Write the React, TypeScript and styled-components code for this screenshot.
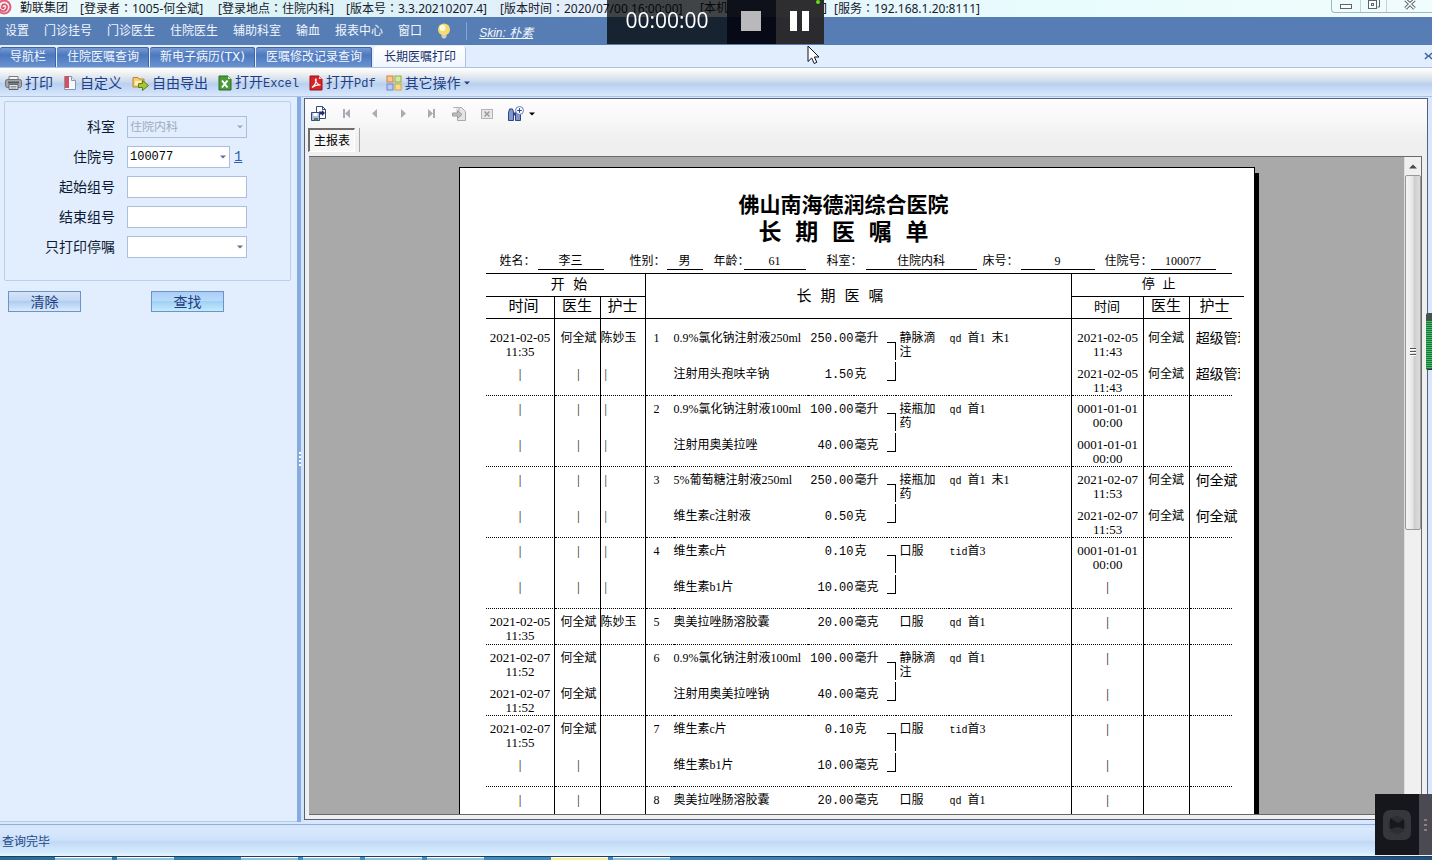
import React from 'react';
import styled, { createGlobalStyle, css } from 'styled-components';

const sans = `"Liberation Sans", "Noto Sans CJK SC", sans-serif`;
const song = `"Liberation Serif", "Noto Sans CJK SC", serif`;
const mono = `"Liberation Mono", "Noto Sans CJK SC", monospace`;

const Global = createGlobalStyle`
  *, *::before, *::after { box-sizing: border-box; }
  html, body { margin: 0; padding: 0; }
  body { font-family: ${sans}; font-size: 12px; background: #e2eefe; overflow: hidden; }
  button, input, select { font: inherit; color: inherit; margin: 0; padding: 0; border: 0; background: none; }
`;

const Window = styled.div`
  display: flex;
  flex-direction: column;
  height: 100vh;
  overflow: hidden;
  background: #e2eefe;
`;

/* ---------- title bar ---------- */

const TitleBar = styled.header`
  flex: none;
  display: flex;
  align-items: flex-start;
  height: 17px;
  background: linear-gradient(90deg, #f1fbfd 0, #dcf3f6 20%, #e3eefa 40%, #e6f7fd 60%, #e9fcfd 75%, #f1fcfc 100%);
  color: #16202c;
  font-family: "Noto Sans", "Noto Sans CJK SC", sans-serif;
  line-height: 16px;
  white-space: nowrap;
`;

const Logo = styled.svg`
  flex: none;
  width: 12px;
  height: 16px;
  margin-right: 8px;
`;

const TitlePart = styled.span<{ $width: number }>`
  flex: none;
  display: flex;
  justify-content: space-between;
  width: ${(p) => p.$width}px;
`;

const TitleText = styled.span`
  white-space: pre;
`;

const Colon = styled.span`
  font-family: "Noto Sans CJK TC", sans-serif;
`;

const WindowButtons = styled.div`
  display: flex;
  margin-left: auto;
  height: 13px;
  border: 1px solid #a3b7c0;
  border-top: 0;
  border-right: 0;
  border-radius: 0 0 0 4px;
`;

const WindowButton = styled.button<{ $width: number }>`
  display: flex;
  align-items: flex-start;
  justify-content: center;
  width: ${(p) => p.$width}px;
  height: 12px;
  & + & { border-left: 1px solid #c3d3da; }
`;

/* ---------- menu and tabs ---------- */

const MenuBar = styled.nav`
  flex: none;
  display: flex;
  align-items: center;
  gap: 15px;
  height: 28px;
  padding-left: 5px;
  background: #567db4;
  color: #f2f7ff;
`;

const MenuItem = styled.button`
  line-height: 16px;
  white-space: nowrap;
`;

const MenuDivider = styled.span`
  width: 1px;
  height: 18px;
  margin-right: -3px;
  background: #86a5d0;
`;

const SkinLink = styled.a`
  color: inherit;
  font-style: italic;
  text-decoration: underline;
`;

const TabStrip = styled.div`
  flex: none;
  display: flex;
  align-items: flex-end;
  gap: 1px;
  height: 23px;
  background: #e2eefe;
  border-bottom: 1px solid #a9c1e2;
`;

const Tab = styled.button<{ $active?: boolean }>`
  height: 20px;
  padding: 0 10px;
  border-radius: 3px 3px 0 0;
  white-space: nowrap;
  font-family: "DejaVu Sans", "Noto Sans CJK SC", sans-serif;
  line-height: 20px;
  color: #f4f8ff;
  background: linear-gradient(180deg, #7d9fd6 0, #4c78bd 40%, #6a92cf 100%);
  box-shadow: inset 0 1px 0 #3e64a4, inset -1px 0 0 #3e64a4;
  ${(p) =>
    p.$active &&
    css`
      height: 21px;
      margin-left: 1px;
      color: #17306c;
      background: linear-gradient(180deg, #ffffff, #f0f6ff);
      box-shadow: inset 1px 1px 0 #ffffff, inset -1px 0 0 #a9c1e2;
    `}
`;

const TabClose = styled.button`
  display: flex;
  align-self: center;
  margin-left: auto;
  width: 8px;
  overflow: hidden;
`;

/* ---------- main tool bar ---------- */

const ToolBar = styled.div`
  flex: none;
  display: flex;
  align-items: center;
  gap: 10px;
  height: 29px;
  padding-top: 2px;
  padding-left: 5px;
  border-bottom: 1px solid #a9c3e6;
  background: linear-gradient(180deg, #ffffff 0, #eef0f2 20%, #cbd9ec 50%, #b8d0f0 56%, #d9e8fc 100%);
  color: #203f86;
`;

const ToolButton = styled.button`
  display: flex;
  align-items: center;
  gap: 3px;
  font-size: 14px;
  line-height: 20px;
  white-space: nowrap;
`;

const Latin = styled.span`
  font-family: ${mono};
  font-size: 12px;
`;

/* ---------- body ---------- */

const Body = styled.main`
  flex: 1;
  display: flex;
  min-height: 0;
  padding-right: 4px;
  padding-bottom: 2px;
  border-bottom: 1px solid #8fb0dc;
  background: #d9e6fb;
`;

const SidePanel = styled.aside`
  flex: none;
  width: 297px;
  padding: 4px 6px 0 4px;
  border-bottom: 1px solid #b3cbec;
  background: #e2eefe;
`;

const FilterBox = styled.form`
  display: flex;
  flex-direction: column;
  gap: 8px;
  height: 180px;
  padding-top: 14px;
  border: 1px solid #b8cfec;
  border-radius: 2px;
`;

const FormRow = styled.div`
  display: grid;
  grid-template-columns: 110px auto auto;
  justify-content: start;
  align-items: center;
  column-gap: 12px;
  height: 22px;
`;

const FormLabel = styled.label`
  font-size: 14px;
  line-height: 20px;
  text-align: right;
  color: #0d1a33;
`;

const fieldLook = css`
  height: 22px;
  border: 1px solid #a9bfdd;
  border-radius: 0;
  background: #ffffff;
  color: #000000;
  padding: 0 2px;
  font-family: ${mono};
  font-size: 12px;
  outline: none;
`;

const TextField = styled.input`
  ${fieldLook}
  width: 120px;
`;

const SelectBox = styled.span`
  display: grid;
  align-items: center;
  & > * { grid-area: 1 / 1; }
  & > svg { justify-self: end; margin-right: 4px; pointer-events: none; }
`;

const Select = styled.select<{ $width: number }>`
  ${fieldLook}
  width: ${(p) => p.$width}px;
  appearance: none;
  &:disabled {
    background: #e2eefe;
    color: #a0acbf;
    opacity: 1;
    padding-top: 2px;
  }
`;

const CountLink = styled.a`
  margin-left: -8px;
  color: #2c5fb0;
  font-family: ${mono};
  font-size: 14px;
`;

const ActionRow = styled.div`
  display: flex;
  gap: 70px;
  padding: 10px 4px 0;
`;

const ActionButton = styled.button<{ $hot?: boolean }>`
  width: 73px;
  height: 21px;
  border: 1px solid #6d94c8;
  font-size: 14px;
  line-height: 18px;
  color: #1f3d7c;
  background: ${(p) =>
    p.$hot
      ? 'linear-gradient(180deg, #a9cdf5 0, #b9dbfa 45%, #9fd0f5 50%, #c4eafd 100%)'
      : 'linear-gradient(180deg, #d5e4f8 0, #c3d8f4 45%, #b0cdf0 50%, #d9eafd 100%)'};
`;

const Splitter = styled.div`
  flex: none;
  display: flex;
  align-items: center;
  justify-content: center;
  width: 7px;
  border-left: 4px solid #86abe0;
  background: #d3e3fa;
`;

const Grip = styled.svg`
  flex: none;
  margin-left: -5px;
`;

const Viewer = styled.section`
  flex: 1;
  display: flex;
  flex-direction: column;
  min-width: 0;
  min-height: 0;
  margin-top: 1px;
  margin-bottom: 2px;
  padding: 0 5px 4px 4px;
  border: 1px solid #55607a;
  background: linear-gradient(180deg, #fdfdfd 0, #f8f8f8 20px, #efefef 42px, #f0f0f0 100%);
`;

const ViewerTools = styled.div`
  flex: none;
  display: flex;
  align-items: center;
  gap: 12px;
  height: 29px;
  padding-left: 2px;
`;

const IconButton = styled.button`
  display: flex;
  align-items: center;
  justify-content: center;
  gap: 4px;
  min-width: 16px;
  height: 20px;
`;

const SheetTabs = styled.div`
  flex: none;
  display: flex;
  align-items: flex-start;
  height: 28px;
`;

const SheetTab = styled.button`
  width: 47px;
  height: 24px;
  margin-left: -1px;
  border: 1px solid #ffffff;
  border-top: 2px solid #6d6d6d;
  border-left: 2px solid #6d6d6d;
  background: #f7f7f7;
  color: #000000;
  line-height: 20px;
  white-space: nowrap;
`;

const SheetEdge = styled.span`
  width: 1px;
  height: 24px;
  margin-left: 4px;
  background: #a8a8a8;
`;

const CanvasRow = styled.div`
  flex: 1;
  display: flex;
  min-height: 0;
  border: 1px solid #6a6a6a;
  border-left: 0;
`;

const Canvas = styled.div`
  flex: 1;
  min-width: 0;
  overflow: hidden;
  padding-top: 10px;
  background: #a9a9a9;
`;

const ScrollBar = styled.div`
  flex: none;
  display: flex;
  flex-direction: column;
  width: 17px;
  border-left: 1px solid #dedede;
  background: #f0f0f0;
`;

const ScrollUp = styled.button`
  display: flex;
  align-items: center;
  justify-content: center;
  height: 18px;
`;

const ScrollThumb = styled.div`
  display: flex;
  flex-direction: column;
  align-items: center;
  justify-content: center;
  gap: 1px;
  height: 54%;
  border: 1px solid #989898;
  border-radius: 2px;
  background: linear-gradient(90deg, #f5f5f5 0, #e8e8e8 45%, #cfcfcf 60%, #dcdcdc 100%);
`;

const ThumbLine = styled.span`
  width: 6px;
  height: 2px;
  background: #555555;
  border-bottom: 1px solid #ffffff;
`;

/* ---------- report sheet ---------- */

const Paper = styled.article`
  width: 796px;
  min-height: 1100px;
  margin: 0 auto;
  padding: 23px 0 40px 26px;
  border: 1px solid #000000;
  background: #ffffff;
  box-shadow: 4px 6px 0 #000000;
  color: #000000;
  font-family: ${song};
`;

const Hospital = styled.h1`
  width: 716px;
  margin: 0;
  text-align: center;
  font-size: 21px;
  line-height: 28px;
  font-weight: bold;
`;

const ReportTitle = styled.h2`
  width: 716px;
  margin: 0;
  text-align: center;
  font-family: ${mono};
  font-size: 23px;
  line-height: 30px;
  font-weight: bold;
`;

const PatientLine = styled.div`
  display: flex;
  height: 24px;
  padding-top: 4px;
  line-height: 16px;
  white-space: nowrap;
`;

const PatientLabel = styled.span<{ $before: number; $width: number }>`
  flex: none;
  margin-left: ${(p) => p.$before}px;
  width: ${(p) => p.$width}px;
`;

const PatientValue = styled.span<{ $width: number }>`
  flex: none;
  width: ${(p) => p.$width}px;
  height: 17px;
  border-bottom: 1px solid #000000;
  text-align: center;
`;

const OrderTable = styled.table`
  width: 746px;
  table-layout: fixed;
  border-collapse: separate;
  border-spacing: 0;
`;

const Head = styled.th<{ $height: number; $size: number; $pad?: string; $top?: boolean; $edge?: boolean; $wide?: boolean }>`
  height: ${(p) => p.$height}px;
  padding: ${(p) => p.$pad ?? '0'};
  border-bottom: 1px solid #000000;
  border-top: ${(p) => (p.$top ? '1px solid #000000' : '0')};
  border-right: ${(p) => (p.$edge ? '1px solid #000000' : '0')};
  font-family: ${mono};
  font-weight: normal;
  font-size: ${(p) => p.$size}px;
  line-height: 20px;
  white-space: nowrap;
  ${(p) =>
    p.$wide &&
    css`
      position: relative;
      &::after {
        content: '';
        position: absolute;
        right: -12px;
        bottom: -1px;
        width: 12px;
        height: 1px;
        background: #000000;
      }
    `}
`;

const Spacer = styled.td<{ $edge?: boolean }>`
  height: 6px;
  padding: 0;
  border-right: ${(p) => (p.$edge ? '1px solid #000000' : '0')};
`;

const Cell = styled.td<{ $end: boolean; $edge?: boolean; $align?: string; $left?: number; $height: number }>`
  height: ${(p) => p.$height}px;
  padding: 6px 0 0 ${(p) => p.$left ?? 0}px;
  vertical-align: top;
  text-align: ${(p) => p.$align ?? 'left'};
  line-height: 14px;
  white-space: nowrap;
  border-right: ${(p) => (p.$edge ? '1px solid #000000' : '0')};
  border-bottom: ${(p) => (p.$end ? '1px dotted #000000' : '0')};
`;

const Stamp = styled.div`
  height: 28px;
  font-size: 13px;
  white-space: pre-line;
`;

const Dose = styled.span`
  font-family: ${mono};
`;

const Usage = styled.div`
  width: 38px;
  height: 28px;
  white-space: normal;
`;

const FreqCode = styled.span`
  display: inline-block;
  width: 18px;
  font-family: ${mono};
  font-size: 10px;
`;

const FreqMarks = styled.span`
  display: inline-flex;
  gap: 6px;
`;

const EndNurse = styled.div`
  width: 44px;
  overflow: hidden;
  font-size: 14px;
  line-height: 16px;
`;

const Bracket = styled.div<{ $lower?: boolean }>`
  width: 9px;
  border-right: 1px solid #000000;
  ${(p) =>
    p.$lower
      ? css`
          height: 19px;
          margin-top: -5px;
          border-bottom: 1px solid #000000;
        `
      : css`
          height: 18px;
          margin-top: 11px;
          border-top: 1px solid #000000;
        `}
`;

/* ---------- bottom bars ---------- */

const StatusBar = styled.footer`
  flex: none;
  height: 31px;
  padding-left: 2px;
  border-top: 3px solid #d6e4f8;
  background: linear-gradient(180deg, #d9e9fe 0, #cfe2fb 40%, #c2d9f5 50%, #d6edff 90%, #eef7ff 100%);
  color: #1d4688;
  line-height: 28px;
`;

const TaskBar = styled.div`
  flex: none;
  display: flex;
  gap: 5px;
  height: 4px;
  padding-left: 55px;
  background: linear-gradient(90deg, #2a6a92 0, #3b8fc4 20%, #3f86bd 50%, #24507e 100%);
  border-top: 1px solid #1c3f5c;
`;

const Task = styled.span<{ $active?: boolean }>`
  width: 57px;
  height: 3px;
  border-top: 1px solid #ffffff;
  background: ${(p) => (p.$active ? '#f2ee9a' : '#8fc3dd')};
`;

const TaskGap = styled.span`
  width: 57px;
`;

/* ---------- floating pieces ---------- */

const Recorder = styled.div`
  position: fixed;
  top: 0;
  left: 50%;
  display: flex;
  width: 217px;
  height: 44px;
  margin-left: -109px;
`;

const RecorderTime = styled.output`
  width: 120px;
  background: rgba(0, 0, 0, 0.72);
  color: #ffffff;
  font-family: "Open Sans", sans-serif;
  font-size: 21px;
  line-height: 40px;
  text-align: center;
`;

const RecorderButton = styled.button<{ $dark?: boolean }>`
  display: flex;
  align-items: center;
  justify-content: center;
  flex: 1;
  padding-bottom: 2px;
  background: ${(p) => (p.$dark ? 'rgba(3, 4, 14, 0.95)' : 'rgba(42, 42, 44, 0.98)')};
`;

const RecorderLight = styled.i`
  position: absolute;
  top: 0;
  right: 4px;
  width: 4px;
  height: 4px;
  border-radius: 2px;
  background: #5fe01c;
`;

const Pointer = styled.svg`
  position: fixed;
  top: 45px;
  left: 807px;
`;

const Meter = styled.div`
  position: fixed;
  top: 313px;
  right: 0;
  width: 6px;
  height: 57px;
  border-top: 8px solid #47524c;
  border-bottom: 1px solid #25352c;
  border-radius: 2px 0 0 2px;
  background: repeating-linear-gradient(180deg, #3fbb64 0 1px, #23713c 1px 2px);
`;

const Dock = styled.div`
  position: fixed;
  right: 0;
  bottom: 5px;
  display: flex;
  width: 57px;
  height: 61px;
  background: #15171d;
`;

const DockButton = styled.button`
  flex: 1;
  display: flex;
  align-items: center;
  justify-content: center;
`;

const DockHandle = styled.div`
  display: flex;
  align-items: center;
  justify-content: center;
  width: 13px;
  background: #4b4a53;
`;

/* ---------- data ---------- */

const titleParts: [string, string, number][] = [
  ['勤联集团', '', 60],
  ['[登录者：1005-何全斌]', '', 138],
  ['[登录地点：住院内科]', '', 128],
  ['[版本号：3.3.20210207.4]', '', 154],
  ['[版本时间：2020/07/00 16:00:00]', '', 200],
  ['[本机', ']', 127],
  ['', '', 7],
  ['[服务：192.168.1.20:8111]', '', 160],
];

const menus = ['设置', '门诊挂号', '门诊医生', '住院医生', '辅助科室', '输血', '报表中心', '窗口'];
const tabs = ['导航栏', '住院医嘱查询', '新电子病历(TX)', '医嘱修改记录查询', '长期医嘱打印'];

const patient: [string, string, number, number, number][] = [
  ['姓名：', '李三', 14, 38, 66],
  ['性别：', '男', 26, 37, 36],
  ['年龄：', '61', 11, 30, 62],
  ['科室：', '住院内科', 21, 39, 111],
  ['床号：', '9', 6, 38, 74],
  ['住院号：', '100077', 10, 46, 65],
];

type Line = {
  start: string;
  doctor: string;
  nurse: string;
  drug: string;
  dose: string;
  unit: string;
  stop: string;
  stopDoctor?: string;
  stopNurse?: string;
};
type Group = { no: number; usage: string; code: string; marks: string[]; lines: Line[] };

const line = (
  start: string,
  doctor: string,
  nurse: string,
  drug: string,
  dose: string,
  unit: string,
  stop: string,
  stopDoctor = '',
  stopNurse = '',
): Line => ({ start, doctor, nurse, drug, dose, unit, stop, stopDoctor, stopNurse });

const feb5 = '2021-02-05\n11:35';
const none = '0001-01-01\n00:00';

const groups: Group[] = [
  {
    no: 1, usage: '静脉滴注', code: 'qd', marks: ['首1', '末1'],
    lines: [
      line(feb5, '何全斌', '陈妙玉', '0.9%氯化钠注射液250ml', '250.00', '毫升', '2021-02-05\n11:43', '何全斌', '超级管理'),
      line('|', '|', '|', '注射用头孢呋辛钠', '1.50', '克', '2021-02-05\n11:43', '何全斌', '超级管理'),
    ],
  },
  {
    no: 2, usage: '接瓶加药', code: 'qd', marks: ['首1'],
    lines: [
      line('|', '|', '|', '0.9%氯化钠注射液100ml', '100.00', '毫升', none),
      line('|', '|', '|', '注射用奥美拉唑', '40.00', '毫克', none),
    ],
  },
  {
    no: 3, usage: '接瓶加药', code: 'qd', marks: ['首1', '末1'],
    lines: [
      line('|', '|', '|', '5%葡萄糖注射液250ml', '250.00', '毫升', '2021-02-07\n11:53', '何全斌', '何全斌'),
      line('|', '|', '|', '维生素c注射液', '0.50', '克', '2021-02-07\n11:53', '何全斌', '何全斌'),
    ],
  },
  {
    no: 4, usage: '口服', code: 'tid', marks: ['首3'],
    lines: [
      line('|', '|', '|', '维生素c片', '0.10', '克', none),
      line('|', '|', '|', '维生素b1片', '10.00', '毫克', '|'),
    ],
  },
  {
    no: 5, usage: '口服', code: 'qd', marks: ['首1'],
    lines: [line(feb5, '何全斌', '陈妙玉', '奥美拉唑肠溶胶囊', '20.00', '毫克', '|')],
  },
  {
    no: 6, usage: '静脉滴注', code: 'qd', marks: ['首1'],
    lines: [
      line('2021-02-07\n11:52', '何全斌', '', '0.9%氯化钠注射液100ml', '100.00', '毫升', '|'),
      line('2021-02-07\n11:52', '何全斌', '', '注射用奥美拉唑钠', '40.00', '毫克', '|'),
    ],
  },
  {
    no: 7, usage: '口服', code: 'tid', marks: ['首3'],
    lines: [
      line('2021-02-07\n11:55', '何全斌', '', '维生素c片', '0.10', '克', '|'),
      line('|', '|', '', '维生素b1片', '10.00', '毫克', '|'),
    ],
  },
  {
    no: 8, usage: '口服', code: 'qd', marks: ['首1'],
    lines: [line('|', '|', '', '奥美拉唑肠溶胶囊', '20.00', '毫克', '|')],
  },
];

const columnWidths = [69, 46, 45, 28, 134, 46, 33, 9, 53, 123, 72, 46, 42];
const ruledColumns = [0, 1, 2, 9, 10, 11];

/* ---------- icons ---------- */

const Caret = ({ color = '#5a6f94', size = 6 }: { color?: string; size?: number }) => (
  <svg width={size} height="4" viewBox="0 0 6 4" aria-hidden="true">
    <path d="M0 0.5h6L3 3.5z" fill={color} />
  </svg>
);

const PrinterIcon = () => (
  <svg width="17" height="16" viewBox="0 0 17 16" aria-hidden="true">
    <path d="M4 1.5h9V6H4z" fill="#f4f4f4" stroke="#7c7c7c" />
    <rect x="0.5" y="4.5" width="16" height="8" rx="2" fill="#a3a7ac" stroke="#6d7177" />
    <path d="M3 7.500h11" stroke="#55585e" strokeWidth="2" />
    <path d="M4 9.5h9v5H4z" fill="#e9ecf0" stroke="#60646a" />
    <path d="M5.5 11.5h6M5.5 13h6" stroke="#8b8f94" />
  </svg>
);

const CustomIcon = () => (
  <svg width="14" height="16" viewBox="0 0 14 16" aria-hidden="true">
    <path d="M1.5 1.500h7l4 4v9h-11z" fill="#f6f8fc" stroke="#8a94ae" />
    <path d="M8.500 1.500v4h4" fill="#dfe6f3" stroke="#8a94ae" />
    <path d="M2 1h4v12H2z" fill="#d4505e" />
  </svg>
);

const ExportIcon = () => (
  <svg width="17" height="16" viewBox="0 0 17 16" aria-hidden="true">
    <path d="M1 2.500h5l1 1.500h5v8H1z" fill="#f7cf6a" stroke="#b8862c" />
    <rect x="3" y="6" width="6" height="4" fill="#fff0bd" />
    <path d="M6.500 8.500h4v-3l6 5-6 5v-3h-4z" fill="#a5c832" stroke="#5f7d14" />
  </svg>
);

const ExcelIcon = () => (
  <svg width="14" height="16" viewBox="0 0 14 16" aria-hidden="true">
    <path d="M1 1h9l3 3v11H1z" fill="#4d9a3a" stroke="#2f6f22" />
    <path d="M10 1l3 3h-3z" fill="#d8ecd2" />
    <path d="M4 5.500l5.500 7M9.500 5.500l-5.500 7" stroke="#ffffff" strokeWidth="2" />
  </svg>
);

const PdfIcon = () => (
  <svg width="14" height="16" viewBox="0 0 14 16" aria-hidden="true">
    <path d="M1 1h9l3 3v11H1z" fill="#d8232a" stroke="#a01318" />
    <path d="M10 1l3 3h-3z" fill="#f6d3d3" />
    <path d="M3 12.500c3-2 4.500-6 4-8.500-1.500 0 0 5.500 4.500 6-3-.5-6 .3-8.500 2.500z" fill="none" stroke="#ffffff" strokeWidth="1.200" />
  </svg>
);

const GridIcon = () => (
  <svg width="16" height="16" viewBox="0 0 16 16" aria-hidden="true">
    <rect x="1" y="1" width="6" height="6" fill="#f6c79a" stroke="#d9822f" />
    <rect x="9" y="1" width="6" height="6" fill="#d6e7a8" stroke="#8fb13a" />
    <rect x="1" y="9" width="6" height="6" fill="#b9c9f0" stroke="#6c86cf" />
    <rect x="9" y="9" width="6" height="6" fill="#f7dc8c" stroke="#d9a52f" />
  </svg>
);

const BulbIcon = () => (
  <svg width="14" height="16" viewBox="0 0 14 16" aria-hidden="true">
    <circle cx="7" cy="6.500" r="6" fill="#f5dc6c" />
    <circle cx="5.500" cy="5" r="3" fill="#fffbe0" />
    <path d="M4.500 12h5v2l-1.500 1.500h-2L4.500 14z" fill="#c9ccd0" />
  </svg>
);

const SaveReportIcon = () => (
  <svg width="16" height="16" viewBox="0 0 16 16" aria-hidden="true">
    <path d="M5.500 0.500h6l3 3v9h-9z" fill="#ffffff" stroke="#34477c" />
    <path d="M11.500 0.500v3h3" fill="none" stroke="#34477c" />
    <path d="M8 5.500h3V4l3 3-3 3V8.500H8z" fill="#1c2f66" />
    <path d="M0.500 6.500h8v8h-8z" fill="#a9bde0" stroke="#34477c" />
    <path d="M2.500 7h4v3h-4z" fill="#ffffff" />
    <path d="M3 12h4v2.500H3z" fill="#5a7a4e" />
  </svg>
);

const StepIcon = ({ kind }: { kind: 'first' | 'prev' | 'next' | 'last' }) => (
  <svg width="12" height="12" viewBox="0 0 12 12" aria-hidden="true" fill="#a9adb3">
    {kind === 'first' && <path d="M2 1h2v9H2zM9 1v9L4 5.500z" />}
    {kind === 'prev' && <path d="M8 1v9L3 5.500z" />}
    {kind === 'next' && <path d="M4 1v9l5-4.500z" />}
    {kind === 'last' && <path d="M8 1h2v9H8zM3 1v9l5-4.500z" />}
  </svg>
);

const GotoIcon = () => (
  <svg width="16" height="16" viewBox="0 0 16 16" aria-hidden="true">
    <path d="M4.500 1.500h6l4 4v9h-8v-2" fill="#e4e4e4" stroke="#a9a9a9" />
    <path d="M2 1.500h6v4" fill="none" stroke="#b5b5b5" />
    <path d="M1.500 7h5V4.500L11 8.500l-4.500 4V10h-5z" fill="#bdbdbd" stroke="#9e9e9e" />
  </svg>
);

const StopIcon = () => (
  <svg width="12" height="12" viewBox="0 0 12 12" aria-hidden="true">
    <rect x="0.500" y="1.500" width="11" height="9" fill="#e8e8e8" stroke="#b4b4b4" />
    <path d="M3.500 3.500l5 5M8.500 3.500l-5 5" stroke="#9a9a9a" strokeWidth="1.500" />
  </svg>
);

const FindIcon = () => (
  <svg width="18" height="16" viewBox="0 0 18 16" aria-hidden="true">
    <path d="M2.500 3h3l1 3v8.500h-5V7zM9 6h3l1.500 2v6.500h-5V7z" fill="#7f97d2" stroke="#33437c" />
    <path d="M6.500 6.500h2v3h-2z" fill="#33437c" />
    <circle cx="12.500" cy="4.500" r="4" fill="#f5f8ff" stroke="#6b7fb8" />
    <path d="M12.500 2.200v4.600M10.200 4.500h4.600" stroke="#33437c" />
  </svg>
);

/* ---------- page ---------- */

const WithColon = ({ text }: { text: string }) => {
  const [head, tail] = text.split('：');
  return (
    <TitleText>
      {head}
      {tail !== undefined && <Colon>：</Colon>}
      {tail}
    </TitleText>
  );
};

const orderRow = (group: Group, item: Line, index: number) => {
  const end = index === group.lines.length - 1;
  const paired = group.lines.length > 1;
  const height = index === 0 ? 36 : 35;
  const shared = { $end: end, $height: height };
  return (
    <tr key={`${group.no}-${index}`}>
      <Cell {...shared} $edge $align="center" $left={1}><Stamp>{item.start}</Stamp></Cell>
      <Cell {...shared} $edge $align="center" $left={3}>{item.doctor}</Cell>
      <Cell {...shared} $edge $left={item.nurse === '|' ? 4 : 0}>{item.nurse}</Cell>
      <Cell {...shared} $left={8}>{index === 0 ? group.no : ''}</Cell>
      <Cell {...shared}>{item.drug}</Cell>
      <Cell {...shared} $align="right"><Dose>{item.dose}</Dose></Cell>
      <Cell {...shared} $left={1}>{item.unit}</Cell>
      <Cell {...shared}>{paired && <Bracket $lower={index > 0} />}</Cell>
      <Cell {...shared} $left={4}>{index === 0 && <Usage>{group.usage}</Usage>}</Cell>
      <Cell {...shared} $left={1} $edge>
        {index === 0 && (
          <>
            <FreqCode>{group.code}</FreqCode>
            <FreqMarks>
              {group.marks.map((m) => (
                <span key={m}>{m}</span>
              ))}
            </FreqMarks>
          </>
        )}
      </Cell>
      <Cell {...shared} $edge $align="center" $left={1}><Stamp>{item.stop}</Stamp></Cell>
      <Cell {...shared} $edge $align="center">{item.stopDoctor}</Cell>
      <Cell {...shared} $left={6}>{item.stopNurse && <EndNurse>{item.stopNurse}</EndNurse>}</Cell>
    </tr>
  );
};

const Report = () => (
  <Paper>
    <Hospital>佛山南海德润综合医院</Hospital>
    <ReportTitle>长 期 医 嘱 单</ReportTitle>
    <PatientLine>
      {patient.map(([label, value, before, labelWidth, valueWidth]) => (
        <React.Fragment key={label}>
          <PatientLabel $before={before} $width={labelWidth}>{label}</PatientLabel>
          <PatientValue $width={valueWidth}>{value}</PatientValue>
        </React.Fragment>
      ))}
    </PatientLine>
    <OrderTable>
      <colgroup>
        {columnWidths.map((w, i) => (
          <col key={i} width={w} />
        ))}
      </colgroup>
      <thead>
        <tr>
          <Head colSpan={3} $height={24} $size={14} $pad="0 0 0 8px" $top $edge>开 始</Head>
          <Head colSpan={7} rowSpan={2} $height={46} $size={15} $pad="4px 36px 0 0" $top $edge>长 期 医 嘱</Head>
          <Head colSpan={3} $height={24} $size={13} $pad="0 0 0 14px" $top $wide>停 止</Head>
        </tr>
        <tr>
          <Head $height={22} $size={15} $pad="0 0 0 8px" $edge>时间</Head>
          <Head $height={22} $size={15} $edge>医生</Head>
          <Head $height={22} $size={15} $edge>护士</Head>
          <Head $height={22} $size={13} $edge>时间</Head>
          <Head $height={22} $size={15} $edge>医生</Head>
          <Head $height={22} $size={15} $pad="0 0 0 8px">护士</Head>
        </tr>
      </thead>
      <tbody>
        <tr>
          {columnWidths.map((_, i) => (
            <Spacer key={i} $edge={ruledColumns.includes(i)} />
          ))}
        </tr>
        {groups.flatMap((g) => g.lines.map((l, i) => orderRow(g, l, i)))}
      </tbody>
    </OrderTable>
  </Paper>
);

export default function App() {
  return (
    <>
      <Global />
      <Window>
        <TitleBar>
          <Logo viewBox="0 0 12 16" aria-hidden="true">
            <circle cx="4" cy="7" r="6.500" fill="#fbe3e8" stroke="#e0607c" strokeWidth="2" />
            <path d="M0 9c1 3 6 3 7-1s-4-5-5-2 2 3 2 1" fill="none" stroke="#d8486a" strokeWidth="1.500" />
          </Logo>
          {titleParts.map(([text, tail, width], i) => (
            <TitlePart key={i} $width={width}>
              <WithColon text={text} />
              {tail && <TitleText>{tail}</TitleText>}
            </TitlePart>
          ))}
          <WindowButtons>
            <WindowButton $width={28} aria-label="最小化">
              <svg width="12" height="10"><rect x="0.500" y="4.500" width="11" height="4" fill="#ffffff" stroke="#5b6670" /></svg>
            </WindowButton>
            <WindowButton $width={26} aria-label="还原">
              <svg width="12" height="10">
                <path d="M2.500 0v-1h9v8h-2" fill="none" stroke="#5b6670" />
                <rect x="0.500" y="0.500" width="8" height="8" fill="#ffffff" stroke="#5b6670" />
                <rect x="3.500" y="3.500" width="2" height="2" fill="none" stroke="#5b6670" />
              </svg>
            </WindowButton>
            <WindowButton $width={46} aria-label="关闭">
              <svg width="14" height="10">
                <path d="M2.500 0L7 4 11.500 0M2.500 8.500L7 4l4.500 4.500" fill="none" stroke="#5b6670" strokeWidth="3.500" />
                <path d="M2.500 0L7 4 11.500 0M2.500 8.500L7 4l4.500 4.500" fill="none" stroke="#ffffff" strokeWidth="1.500" />
              </svg>
            </WindowButton>
          </WindowButtons>
        </TitleBar>

        <MenuBar>
          {menus.map((m) => (
            <MenuItem key={m}>{m}</MenuItem>
          ))}
          <BulbIcon />
          <MenuDivider />
          <SkinLink href="#skin">Skin: 朴素</SkinLink>
        </MenuBar>

        <TabStrip>
          {tabs.map((t, i) => (
            <Tab key={t} $active={i === tabs.length - 1}>{t}</Tab>
          ))}
          <TabClose aria-label="关闭标签">
            <svg width="10" height="8"><path d="M1 1l3 3-3 3M8 1L5 4l3 3" fill="none" stroke="#3f66a6" strokeWidth="1.500" /></svg>
          </TabClose>
        </TabStrip>

        <ToolBar>
          <ToolButton><PrinterIcon />打印</ToolButton>
          <ToolButton><CustomIcon />自定义</ToolButton>
          <ToolButton><ExportIcon />自由导出</ToolButton>
          <ToolButton><ExcelIcon /><span>打开<Latin>Excel</Latin></span></ToolButton>
          <ToolButton><PdfIcon /><span>打开<Latin>Pdf</Latin></span></ToolButton>
          <ToolButton><GridIcon />其它操作<Caret color="#203f86" /></ToolButton>
        </ToolBar>

        <Body>
          <SidePanel>
            <FilterBox onSubmit={(e) => e.preventDefault()}>
              <FormRow>
                <FormLabel htmlFor="dept">科室</FormLabel>
                <SelectBox>
                  <Select id="dept" $width={120} disabled defaultValue="a">
                    <option value="a">住院内科</option>
                  </Select>
                  <Caret color="#9aa9c2" />
                </SelectBox>
              </FormRow>
              <FormRow>
                <FormLabel htmlFor="admission">住院号</FormLabel>
                <SelectBox>
                  <Select id="admission" $width={103} defaultValue="100077">
                    <option value="100077">100077</option>
                  </Select>
                  <Caret />
                </SelectBox>
                <CountLink href="#count">1</CountLink>
              </FormRow>
              <FormRow>
                <FormLabel htmlFor="from">起始组号</FormLabel>
                <TextField id="from" />
              </FormRow>
              <FormRow>
                <FormLabel htmlFor="to">结束组号</FormLabel>
                <TextField id="to" />
              </FormRow>
              <FormRow>
                <FormLabel htmlFor="stopped">只打印停嘱</FormLabel>
                <SelectBox>
                  <Select id="stopped" $width={120} />
                  <Caret />
                </SelectBox>
              </FormRow>
            </FilterBox>
            <ActionRow>
              <ActionButton>清除</ActionButton>
              <ActionButton $hot>查找</ActionButton>
            </ActionRow>
          </SidePanel>

          <Splitter>
            <Grip width="3" height="18" aria-hidden="true">
              {[1, 5, 9, 13].map((y) => (
                <rect key={y} x="0" y={y} width="2" height="2" fill="#ffffff" />
              ))}
            </Grip>
          </Splitter>

          <Viewer>
            <ViewerTools>
              <IconButton aria-label="导出报表"><SaveReportIcon /></IconButton>
              <IconButton aria-label="首页"><StepIcon kind="first" /></IconButton>
              <IconButton aria-label="上一页"><StepIcon kind="prev" /></IconButton>
              <IconButton aria-label="下一页"><StepIcon kind="next" /></IconButton>
              <IconButton aria-label="末页"><StepIcon kind="last" /></IconButton>
              <IconButton aria-label="转到"><GotoIcon /></IconButton>
              <IconButton aria-label="停止"><StopIcon /></IconButton>
              <IconButton aria-label="查找"><FindIcon /><Caret color="#000000" /></IconButton>
            </ViewerTools>
            <SheetTabs>
              <SheetTab>主报表</SheetTab>
              <SheetEdge />
            </SheetTabs>
            <CanvasRow>
              <Canvas><Report /></Canvas>
              <ScrollBar>
                <ScrollUp aria-label="向上滚动">
                  <svg width="8" height="5"><path d="M0 4.500h8L4 0.500z" fill="#4a4a4a" /></svg>
                </ScrollUp>
                <ScrollThumb><ThumbLine /><ThumbLine /><ThumbLine /></ScrollThumb>
              </ScrollBar>
            </CanvasRow>
          </Viewer>
        </Body>

        <StatusBar>查询完毕</StatusBar>
        <TaskBar>
          <Task /><Task /><TaskGap /><Task /><Task /><Task /><Task /><TaskGap /><Task $active /><Task />
        </TaskBar>
      </Window>

      <Recorder>
        <RecorderTime>00:00:00</RecorderTime>
        <RecorderButton $dark aria-label="停止录制">
          <svg width="20" height="20"><rect width="20" height="20" fill="#b9b9bb" /></svg>
        </RecorderButton>
        <RecorderButton aria-label="暂停录制">
          <svg width="19" height="20"><path d="M0 0h7v20H0zM12 0h7v20h-7z" fill="#ffffff" /></svg>
        </RecorderButton>
        <RecorderLight />
      </Recorder>
      <Pointer width="13" height="20" viewBox="0 0 13 20" aria-hidden="true">
        <path d="M1 1v15.500l3.700-3.500 2.500 5.500 2.600-1.200-2.400-5.300h4.600z" fill="#ffffff" stroke="#0b1020" />
      </Pointer>
      <Meter />
      <Dock>
        <DockButton aria-label="录像">
          <svg width="28" height="30" viewBox="0 0 28 30">
            <rect x="0" y="0" width="28" height="30" rx="7" fill="#35373c" />
            <path d="M5 15a9 9 0 0 1 18 0 9 9 0 0 1-18 0z" fill="#2c2e33" />
            <path d="M7 8l8 5 6-4v10l-6-2-8 2z" fill="#17181c" />
          </svg>
        </DockButton>
        <DockHandle>
          <svg width="4" height="14"><path d="M0 2h3M0 7h3M0 12h3" stroke="#8c7f80" strokeWidth="2" /></svg>
        </DockHandle>
      </Dock>
    </>
  );
}
